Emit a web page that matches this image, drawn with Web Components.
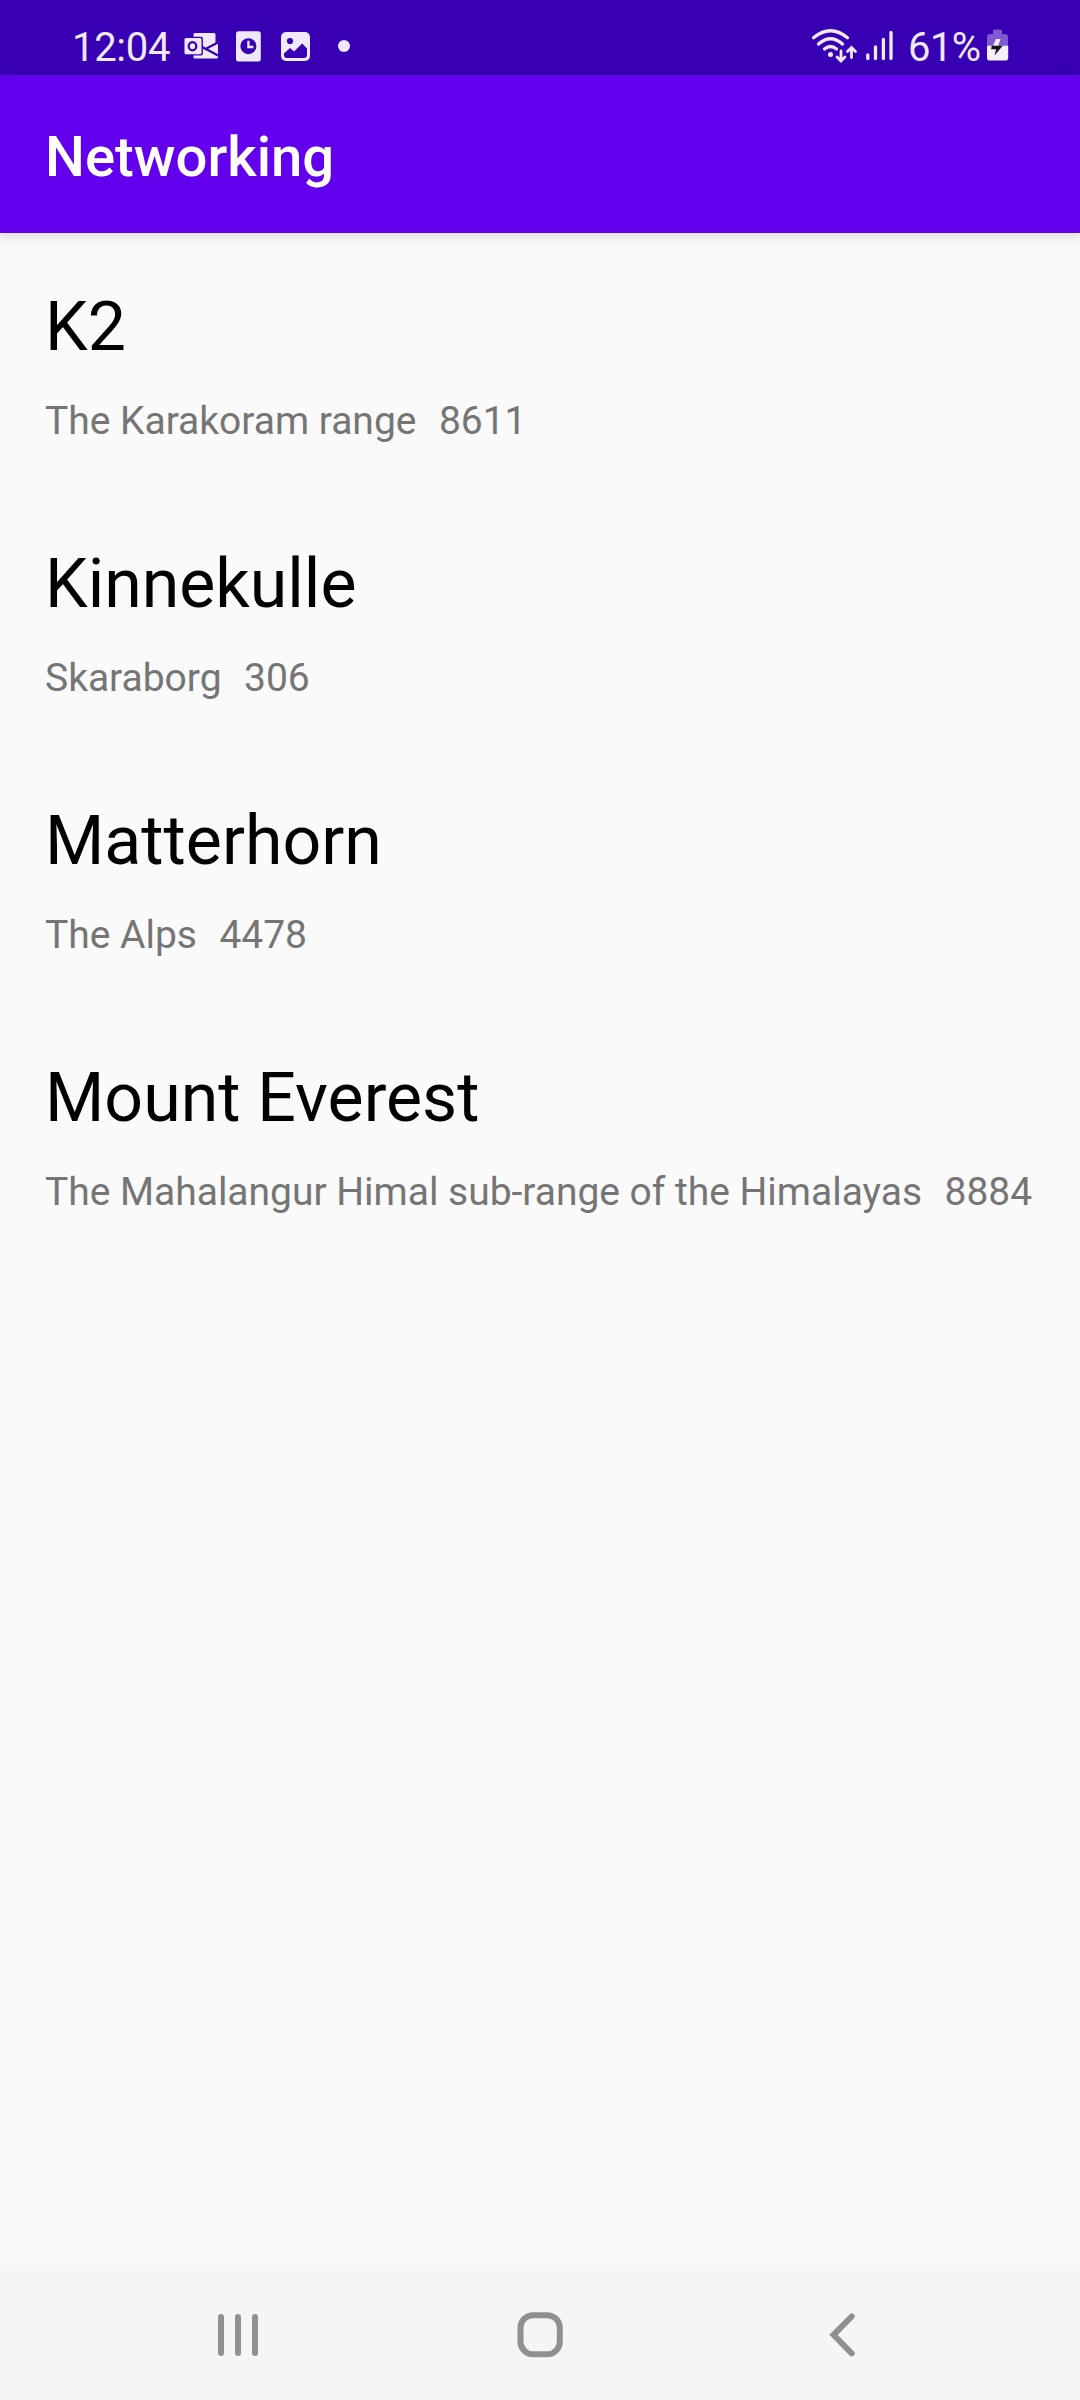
<!DOCTYPE html>
<html lang="en">
<head>
<meta charset="utf-8">
<title>Networking</title>
<style>
html,body{margin:0;padding:0}
body{width:1080px;height:2400px;overflow:hidden;font-family:Roboto,"Liberation Sans",sans-serif;background:#fafafa}
</style>
</head>
<body>
<phone-screen>
  <status-bar slot="status" time="12:04" battery="61%"></status-bar>
  <app-bar slot="bar">Networking</app-bar>
  <mountain-item location="The Karakoram range" height="8611">K2</mountain-item>
  <mountain-item location="Skaraborg" height="306">Kinnekulle</mountain-item>
  <mountain-item location="The Alps" height="4478">Matterhorn</mountain-item>
  <mountain-item location="The Mahalangur Himal sub-range of the Himalayas" height="8884">Mount Everest</mountain-item>
  <nav-bar slot="nav"></nav-bar>
</phone-screen>
<script>
class Base extends HTMLElement {
  connectedCallback() {
    if (!this.shadowRoot) this.attachShadow({ mode: "open" }).innerHTML = this.view();
  }
}

customElements.define("phone-screen", class extends Base {
  view() {
    return `<style>
      :host{display:flex;flex-direction:column;width:1080px;height:2400px;background:#fafafa}
      main{flex:1;min-height:0;display:flex;flex-direction:column;padding-top:31px}
    </style>
    <slot name="status"></slot><slot name="bar"></slot>
    <main><slot></slot></main>
    <slot name="nav"></slot>`;
  }
});

customElements.define("status-bar", class extends Base {
  view() {
    return `<style>
      :host{display:flex;justify-content:space-between;height:75px;padding:0 70px 0 72px;box-sizing:border-box;background:#3700b3;color:#f0e8fd;font-size:40px;line-height:47px}
      div{display:flex}
      span{padding-top:24px;height:47px;white-space:nowrap}
      .time{width:108px;letter-spacing:-.3px}
      .level{width:78px;padding-left:1px;letter-spacing:-.6px}
      svg{display:block;flex:none}
    </style>
    <div>
      <span class="time">${this.getAttribute("time")}</span>
      <svg width="180" height="75" viewBox="180 0 180 75" fill="#f0e8fd">
        <path d="M195 33h19q1.500 0 1.500 1.500v9l2.500-1.200v14.700q0 1.500-1.500 1.500h-22q-1 0-1-1v-23q0-1.500 1.500-1.500z"/>
        <path d="M200 45.500l5.500 3.500 12.500-6.500M206 49l12 6.500" fill="none" stroke="#3700b3" stroke-width="2.200"/>
        <rect x="183.300" y="36.800" width="19.600" height="18.600" rx="2" fill="#3700b3"/>
        <rect x="184.500" y="38" width="17" height="16.300" rx="1.500"/>
        <ellipse cx="192.500" cy="46.200" rx="3.800" ry="4.100" fill="none" stroke="#3700b3" stroke-width="2.200"/>
        <rect x="236" y="31.200" width="24.800" height="30.300" rx="2.500"/>
        <circle cx="248.400" cy="46.200" r="8" fill="#3700b3"/>
        <path d="M248.400 40.800v6.200h5" fill="none" stroke="#f0e8fd" stroke-width="2.300"/>
        <rect x="281" y="32" width="29" height="29" rx="5"/>
        <circle cx="290" cy="41" r="3.100" fill="#3700b3"/>
        <path d="M284 53.500l6-5.500 4 3.500 8.200-8 4.800 5v6.500q0 3-3 3h-17q-3 0-3-3z" fill="#3700b3"/>
        <circle cx="344" cy="46" r="6"/>
      </svg>
    </div>
    <div>
      <svg width="99" height="75" viewBox="808 0 99 75" fill="none" stroke="#f0e8fd" stroke-width="3.300" stroke-linecap="round">
        <path d="M813.500 37.800q17-14 34 0M818.500 44q12-10.500 24 0M824.500 49q6-5 12 0"/>
        <circle cx="830.500" cy="54.500" r="2.500" fill="#f0e8fd" stroke="none"/>
        <path d="M841 51v8.500M837 57l4 4 4-4M851.500 57.500v-9M847.500 51.500l4-4 4 4" stroke-width="2.800"/>
        <path d="M867.800 55v3.500M875.500 47v11.500M883.400 39.500v19M891 32.500v26"/>
      </svg>
      <span class="level">${this.getAttribute("battery")}</span>
      <svg width="24" height="75" viewBox="986 0 24 75">
        <path d="M987 46v-9q0-3 3-3h3v-3q0-1.500 1.500-1.500h6q1.500 0 1.500 1.500v3h3q3 0 3 3v9z" fill="#8058d0"/>
        <path d="M987 45.700h21.200v12q0 2.800-2.800 2.800h-15.600q-2.800 0-2.800-2.800z" fill="#f5effe"/>
        <path d="M996 39h4.500l-2.300 6.700h-5.200z" fill="#f5effe"/>
        <path d="M991.800 45.700h11l-8.300 9.800 1.600-6.300h-5z" fill="#17131d"/>
      </svg>
    </div>`;
  }
});

customElements.define("app-bar", class extends Base {
  view() {
    return `<style>
      :host{display:flex;align-items:center;height:158px;padding:5px 45px 0;box-sizing:border-box;background:#6200ee;color:#fff;font-size:56.250px;font-weight:500;line-height:66px;box-shadow:0 4px 12px rgba(0,0,0,.13)}
    </style><slot></slot>`;
  }
});

customElements.define("mountain-item", class extends Base {
  view() {
    return `<style>
      :host{display:block;height:257px;padding:24px 45px 0;box-sizing:border-box}
      h2{margin:0;font-weight:400;font-size:68px;line-height:79px;color:#000}
      p{margin:31px 0 0;display:flex;gap:22.500px;font-size:39px;line-height:46px;letter-spacing:-.02px;color:#757575;white-space:nowrap}
    </style>
    <h2><slot></slot></h2>
    <p><span>${this.getAttribute("location")}</span><span>${this.getAttribute("height")}</span></p>`;
  }
});

customElements.define("nav-bar", class extends Base {
  view() {
    return `<style>
      :host{display:flex;justify-content:space-between;align-items:center;height:135px;padding:5px 210px 0;box-sizing:border-box;background:#f5f5f5}
      svg{display:block;fill:none;stroke:#909090;stroke-width:6;stroke-linecap:round}
    </style>
    <svg width="56" height="60" viewBox="210 2305 56 60"><path d="M221 2317v36M238 2317v36M255 2317v36"/></svg>
    <svg width="56" height="60" viewBox="512 2305 56 60"><rect x="520.500" y="2315.300" width="39.300" height="39" rx="12.500"/></svg>
    <svg width="56" height="60" viewBox="814 2305 56 60"><path d="M851.700 2316.500L833.500 2334.800 851.700 2353.300"/></svg>`;
  }
});
</script>
</body>
</html>
